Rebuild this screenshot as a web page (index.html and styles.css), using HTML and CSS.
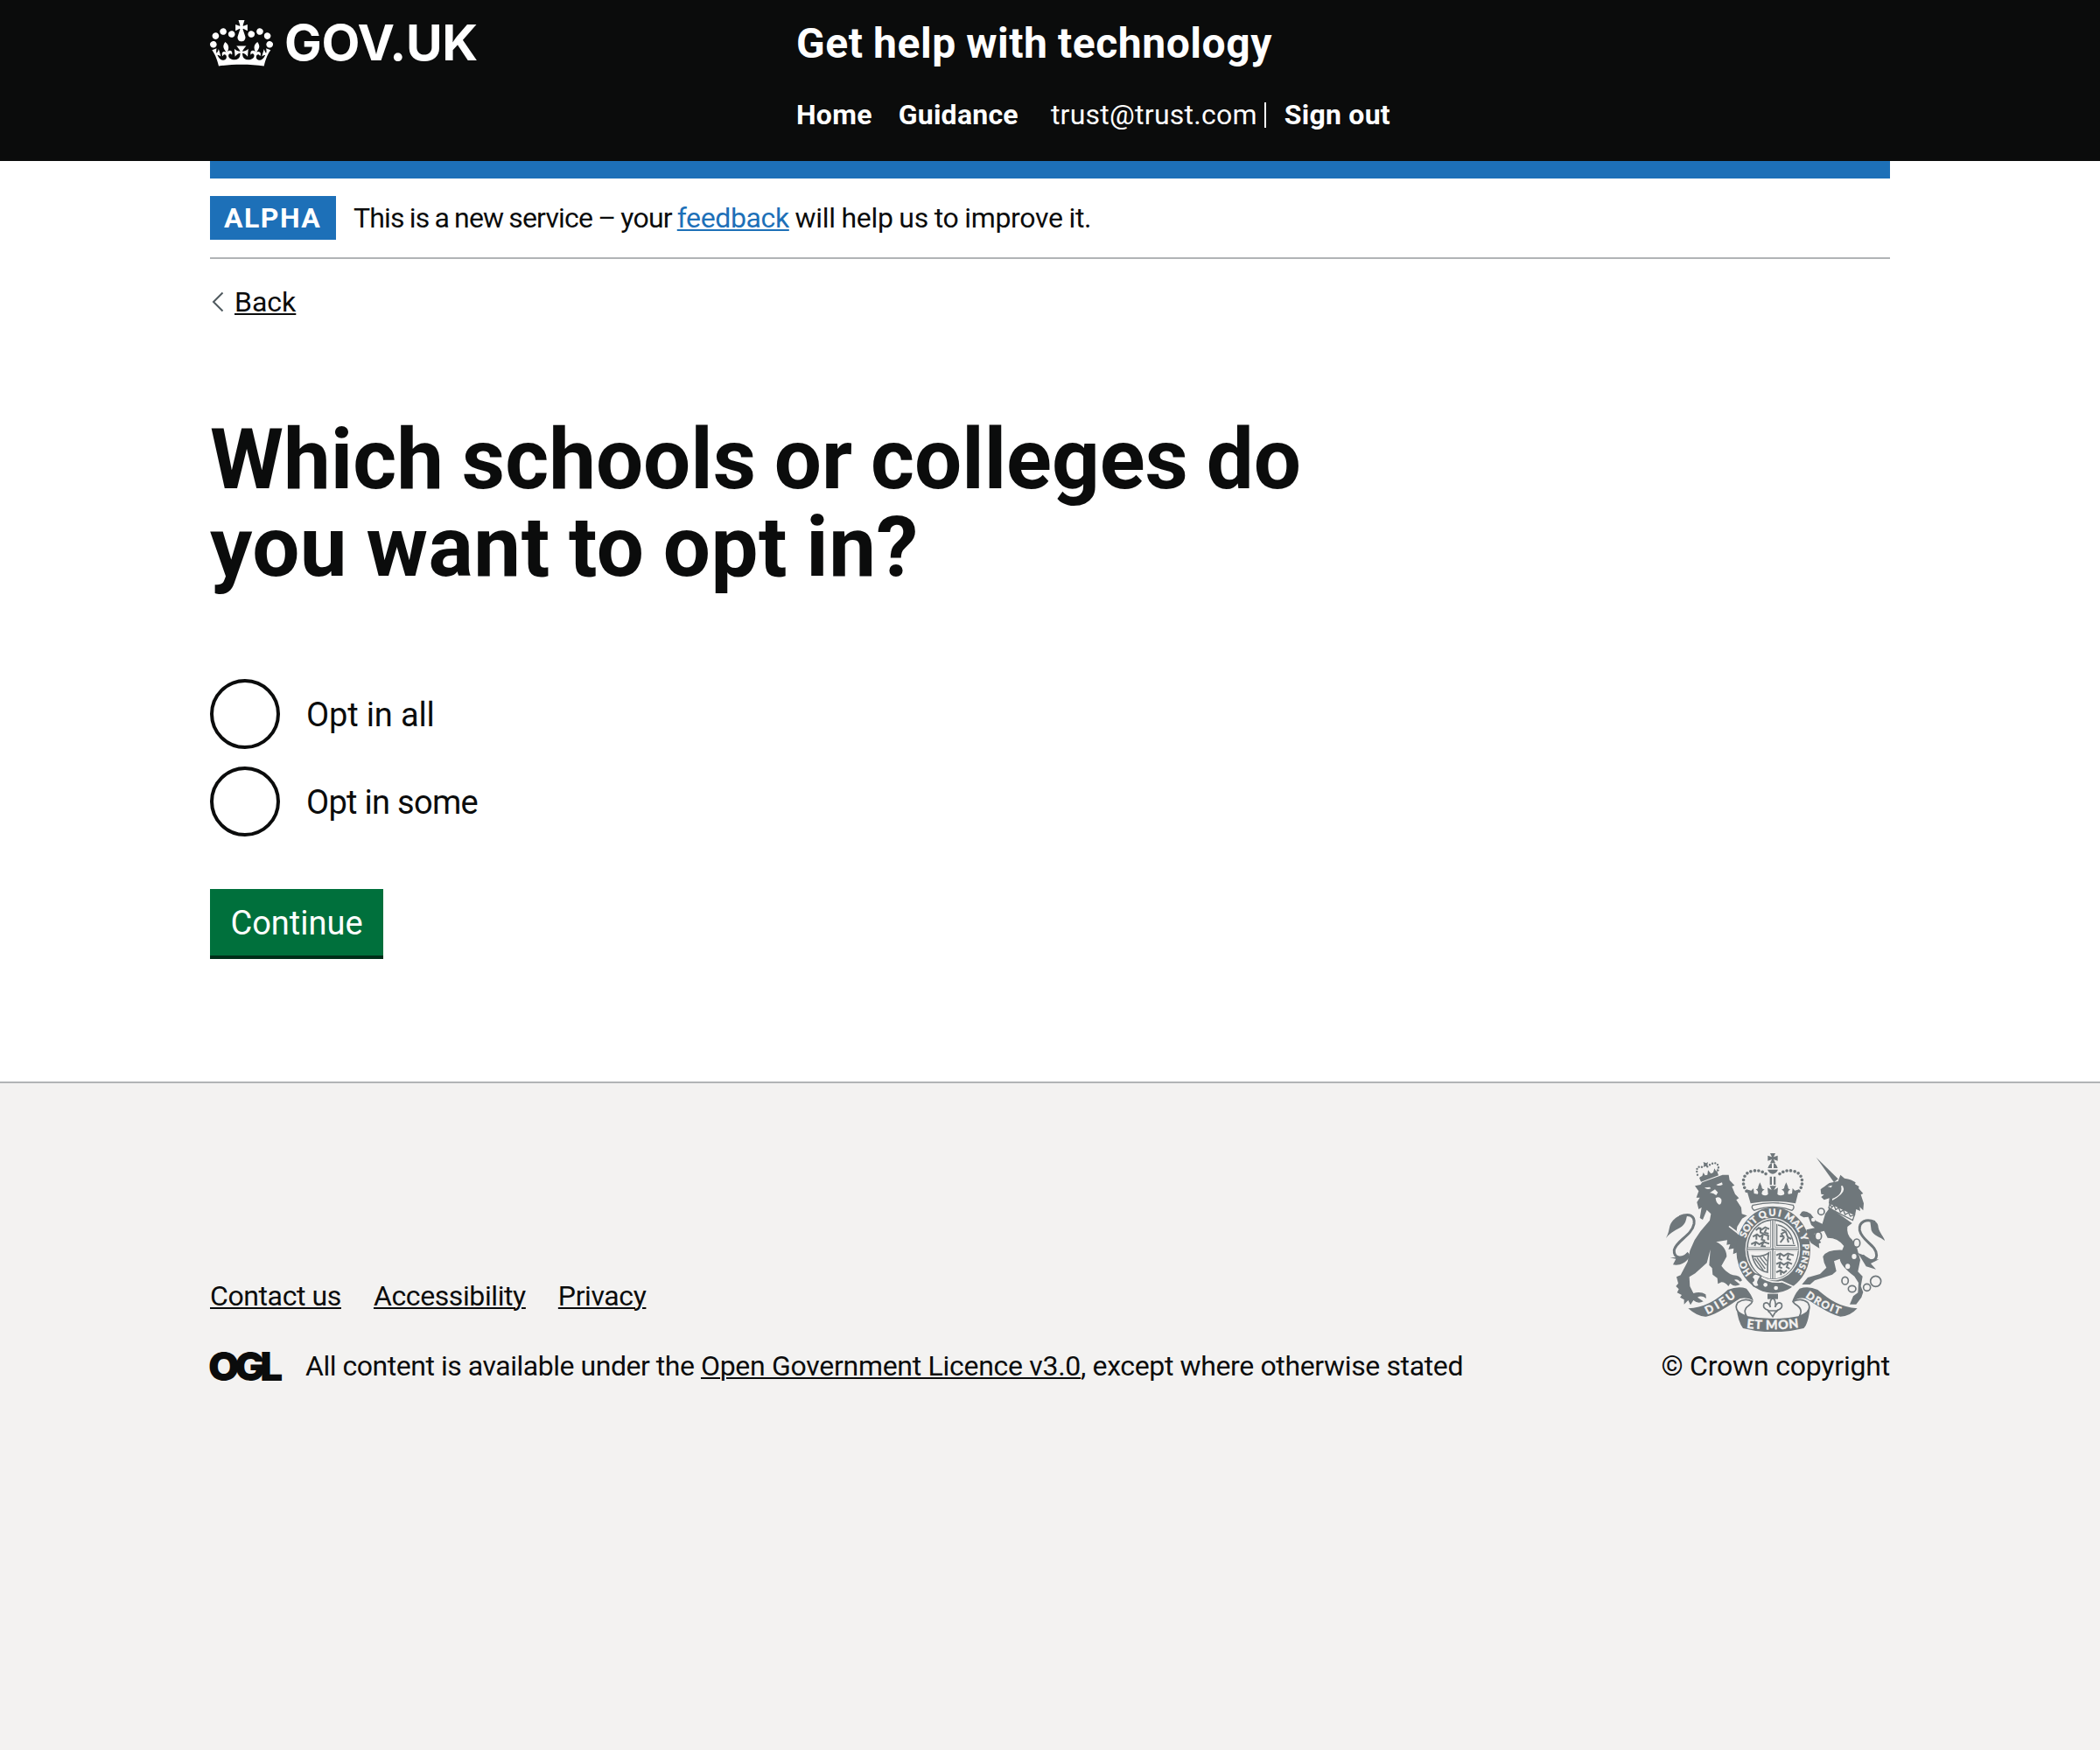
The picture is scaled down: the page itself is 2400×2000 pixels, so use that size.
FILE: index.html
```html
<!DOCTYPE html>
<html lang="en">
<head>
<meta charset="utf-8">
<title>Which schools or colleges do you want to opt in? - Get help with technology</title>
<link rel="stylesheet" href="styles.css">
</head>
<body>
<header class="header">
  <div class="width header-row">
    <a class="logo" href="#" aria-label="GOV.UK">
      <svg class="logo-crown" viewBox="0 0 132 97" width="72" height="53"><path fill="currentColor" fill-rule="evenodd" d="M25 30.2c3.5 1.5 7.7-.2 9.1-3.7 1.5-3.6-.2-7.8-3.9-9.2-3.6-1.4-7.6.3-9.1 3.9-1.4 3.5.3 7.5 3.9 9zM9 39.5c3.6 1.5 7.8-.2 9.2-3.7 1.5-3.6-.2-7.8-3.9-9.1-3.6-1.5-7.6.2-9.1 3.8-1.4 3.5.3 7.5 3.8 9zM4.4 57.2c3.5 1.5 7.7-.2 9.1-3.8 1.5-3.6-.2-7.7-3.9-9.1-3.5-1.5-7.6.3-9.1 3.8-1.4 3.5.3 7.6 3.9 9.1zm38.3-21.4c3.5 1.5 7.7-.2 9.1-3.8 1.5-3.6-.2-7.7-3.9-9.1-3.6-1.5-7.6.3-9.1 3.8-1.3 3.6.4 7.7 3.9 9.1zm64.4-5.6c-3.6 1.5-7.8-.2-9.1-3.7-1.5-3.6.2-7.8 3.8-9.2 3.6-1.4 7.7.3 9.2 3.9 1.3 3.5-.4 7.5-3.9 9zm15.9 9.3c-3.6 1.5-7.7-.2-9.1-3.7-1.5-3.6.2-7.8 3.7-9.1 3.6-1.5 7.7.2 9.2 3.8 1.5 3.5-.3 7.5-3.8 9zm4.7 17.7c-3.6 1.5-7.8-.2-9.2-3.8-1.5-3.6.2-7.7 3.9-9.1 3.6-1.5 7.7.3 9.2 3.8 1.3 3.5-.4 7.6-3.9 9.1zM89.3 35.8c-3.6 1.5-7.8-.2-9.2-3.8-1.4-3.6.2-7.7 3.9-9.1 3.6-1.5 7.7.3 9.2 3.8 1.4 3.6-.3 7.7-3.9 9.1zM69.7 17.7l8.9 4.7V9.3l-8.9 2.8c-.2-.3-.5-.6-.9-.9L72.4 0H59.6l3.5 11.2c-.3.3-.6.5-.9.9l-8.8-2.8v13.1l8.8-4.7c.3.3.6.7.9.9l-5 15.4v.1c-.2.8-.4 1.6-.4 2.4 0 4.1 3.1 7.5 7 8.1h.2c.3 0 .7.1 1 .1.4 0 .7 0 1-.1h.2c4-.6 7.1-4.1 7.1-8.1 0-.8-.1-1.7-.4-2.4V34l-5.1-15.4c.4-.2.7-.6 1-.9zM66 92.8c16.9 0 32.8 1.1 47.1 3.2 4-16.9 8.9-26.7 14-33.5l-9.6-3.4c1 4.9 1.1 7.2 0 10.2-1.5-1.4-3-4.3-4.2-8.7L108.6 76c2.8-2 5-3.2 7.5-3.3-4.4 9.4-10 11.9-13.6 11.2-4.3-.8-6.3-4.6-5.6-7.9 1-4.7 5.7-5.9 8-.5 4.3-8.7-3-11.4-7.6-8.8 7.1-7.2 7.9-13.5 2.1-21.1-8 6.1-8.1 12.3-4.5 20.8-4.7-5.4-12.1-2.5-9.5 6.2 3.4-5.2 7.9-2 7.2 3.1-.6 4.3-6.4 7.8-13.5 7.2-10.3-.9-10.9-8-11.2-13.8 2.5-.5 7.1 1.8 11 7.3L80.2 60c-4.1 4.4-8 5.3-12.3 5.4 1.4-4.4 8-11.6 8-11.6H55.5s6.4 7.2 7.9 11.6c-4.2-.1-8-1-12.3-5.4l1.4 16.4c3.9-5.5 8.5-7.7 10.9-7.3-.3 5.8-.9 12.8-11.1 13.8-7.2.6-12.9-2.9-13.5-7.2-.7-5 3.8-8.3 7.1-3.1 2.7-8.7-4.6-11.6-9.4-6.2 3.7-8.5 3.6-14.7-4.6-20.8-5.8 7.6-5 13.9 2.2 21.1-4.7-2.6-11.9.1-7.7 8.8 2.3-5.5 7.1-4.2 8.1.5.7 3.3-1.3 7.1-5.7 7.9-3.5.7-9-1.8-13.5-11.2 2.5.1 4.7 1.3 7.5 3.3l-4.7-15.4c-1.2 4.4-2.7 7.2-4.3 8.7-1.1-3-.9-5.3 0-10.2l-9.5 3.4c5 6.9 9.9 16.7 14 33.5 14.8-2.1 30.8-3.2 47.7-3.2z"/></svg>
      <span class="logo-text">GOV.UK</span>
    </a>
    <div class="header-content">
      <a class="service-name" href="#">Get help with technology</a>
      <nav class="nav">
        <a class="nav-home" href="#">Home</a>
        <a class="nav-guidance" href="#">Guidance</a>
        <span class="nav-user">trust@trust.com</span>
        <span class="nav-divider"></span>
        <a class="nav-signout" href="#">Sign out</a>
      </nav>
    </div>
  </div>
</header>

<div class="width">
  <div class="blue-bar"></div>
  <div class="phase-banner">
    <strong class="tag">ALPHA</strong>
    <span class="phase-text"><span class="phase-lead">This is a new service – your </span><a href="#">feedback</a><span class="phase-rest"> will help us to improve it.</span></span>
  </div>
  <a class="back" href="#">
    <svg class="back-arrow" viewBox="0 0 14 24" width="14" height="24"><path d="M12.500 1.500 2 12l10.500 10.500" fill="none" stroke="#505a5f" stroke-width="2"/></svg>
    <span class="back-text">Back</span>
  </a>
  <main class="main">
    <h1 class="heading">Which schools or colleges do<br><span class="heading-end">you want to opt in?</span></h1>
    <div class="radios">
      <label class="radio"><span class="radio-circle"></span><span class="radio-label">Opt in all</span></label>
      <label class="radio"><span class="radio-circle"></span><span class="radio-label radio-label-some">Opt in some</span></label>
    </div>
    <button class="button" type="button">Continue</button>
  </main>
</div>

<footer class="footer">
  <div class="width footer-row">
    <div class="footer-meta">
      <div class="footer-links">
        <a href="#">Contact us</a>
        <a href="#">Accessibility</a>
        <a href="#">Privacy</a>
      </div>
      <div class="licence">
        <span class="ogl">OGL</span>
        <span class="licence-text"><span class="licence-lead">All content is available under the </span><a href="#">Open Government Licence v3.0</a><span class="licence-rest">, except where otherwise stated</span></span>
      </div>
    </div>
    <div class="crown-copyright">
      <svg class="arms" viewBox="42 54 750 612" width="250" height="204">
        <defs>
          <path id="garter" d="M410 500A101 117 0 0 1 309 386A101 117 0 0 1 410 269A101 117 0 0 1 511 386A101 117 0 0 1 410 500"/>
          <path id="ribbon-left" d="M184 607Q240 580 288 542"/>
          <path id="ribbon-right" d="M519 547Q572 586 646 610"/>
          <path id="ribbon-mid" d="M318 653Q410 664 506 650"/>
        </defs>
        <!-- lion -->
        <g class="ink">
          <path d="M42 345C60 312 46 300 75 276C88 266 102 262 114 268C110 288 108 296 96 305C78 318 58 322 42 345Z"/>
          <path class="line" stroke-width="9" d="M88 272C122 258 142 268 138 296C130 338 78 352 70 386C68 412 92 420 120 398"/>
          <path d="M56 412L76 416L66 436C84 440 108 434 124 408L116 392L98 410Z"/>
          <path d="M156 138L218 118L222 130L162 152Z"/>
          <path d="M152 118L158 136L166 132L170 120L176 130L184 128L186 112L196 124L204 120L208 106L214 116L222 100L216 122L160 142Z"/>
          <path class="dots" stroke-width="7" stroke-dasharray="0 10" d="M150 128C142 100 156 96 172 104M184 100C200 86 220 80 222 104L220 116"/>
          <path d="M170 84l10 4 6-4-2 10 2 8-8-4-8 4 2-8z"/>
          <path d="M141 166L160 162L166 154L236 128L257 128L260 146L277 164L268 168L279 194L292 208L283 214L300 240L302 262L320 268L303 278L286 306L284 320L300 338L316 368L318 396L308 414L300 400L290 412L286 394L272 400L274 380L256 384L262 366L250 368L252 352L214 358C236 368 250 386 250 408L232 440C246 460 262 468 272 472Q296 472 303 490L296 494Q286 484 276 488L296 504Q276 514 262 500L256 510Q246 496 232 496L220 502L218 482L202 470L200 448L190 438L194 384L182 430L142 466L122 478L124 510L136 534Q160 526 178 538L180 552Q164 540 150 548L170 562Q152 572 136 558L126 574L118 558L104 572L104 556L90 548L96 540L80 532L86 520L76 510L84 500L78 478L92 472L116 426L124 388L140 352L160 322L192 284L196 262L182 248L168 282L158 276L164 240L154 246L148 222L158 206L146 206L154 184Z"/>
        </g>
        <path class="paper" d="M174 172Q182 180 196 175L192 170ZM214 162Q222 168 236 162L234 154ZM192 190L210 178L220 188L214 198Q202 188 192 190ZM212 208Q224 200 232 212Q234 228 224 230Q214 226 212 208Z"/>
        <path class="slit" d="M258 304L284 324L302 342"/>
        <!-- unicorn -->
        <g class="ink">
          <path d="M557 68L632 142L618 154Z"/>
          <path d="M572 178Q582 170 602 156L632 150L640 128L654 140Q680 144 692 154L690 160L704 168L702 174L718 192L710 196L720 226L718 250L706 238L708 252L694 246L690 268L600 226L602 208L584 214L574 204L584 196L574 194Z"/>
          <path d="M604 240L588 262L578 296L556 286L538 262Q520 250 508 254L500 266L514 274L530 272L540 300L552 310L524 316L522 336L540 362L568 380L566 364L574 360L550 330L584 320L596 344Q632 344 652 372L646 386Q594 384 580 408Q582 430 592 446L570 468L528 480L508 504L536 504L552 490L612 470L626 458L618 424L638 416Q640 440 688 476L702 498L700 532L684 544L672 572L694 572L712 548L718 530L710 510L716 476L700 460L708 420L696 376L680 350Q660 334 664 306L680 294Z"/>
          <path d="M742 288C756 280 770 292 770 308C774 328 790 340 792 354C776 340 754 338 746 318Z"/>
          <path class="line" stroke-width="9" d="M758 290C730 276 702 288 706 318C714 356 764 368 764 404C762 426 738 430 716 404"/>
          <path d="M700 396L722 404L744 418L772 418L744 432L762 452L728 442Z"/>
          <path class="line" stroke-width="4" d="M604 226l6 14 8-8 6 16 10-8 6 16 10-8 6 16 12-6 6 12 14-4-6 18-82-42z"/>
          <g class="paper-fill" stroke-width="5"><ellipse cx="574" cy="254" rx="11" ry="11"/><ellipse cx="564" cy="338" rx="11" ry="14"/><ellipse cx="696" cy="362" rx="11" ry="14"/><ellipse cx="656" cy="491" rx="11" ry="13"/><ellipse cx="680" cy="519" rx="13" ry="11"/><ellipse cx="731" cy="514" rx="12" ry="12"/><circle cx="761" cy="493" r="18"/></g>
        </g>
        <path class="paper" d="M596 168l16-4-4 8zM648 166Q660 186 628 206L612 216L612 210Q650 196 642 166ZM657 442a8 9 0 1 0 16 0a8 9 0 1 0-16 0M679 408a8 9 0 1 0 16 0a8 9 0 1 0-16 0M540 282a7 7 0 1 0 14 0a7 7 0 1 0-14 0"/>
        <!-- garter and shield -->
        <ellipse class="ink" cx="410" cy="386" rx="127" ry="147"/>
        <ellipse class="paper" cx="408" cy="383" rx="94" ry="107"/>
        <ellipse class="ink" cx="408" cy="383" rx="90" ry="103"/>
        <path class="paper" d="M400 286V376H324C326 330 358 290 400 286ZM416 286V376H494C490 330 458 290 416 286ZM400 390V484C358 478 328 440 324 390ZM416 390V484C460 478 490 440 494 390Z"/>
        <g class="line" stroke-width="6">
          <path d="M350 318l10-8 10 6 12-8 14 6M366 308v18l10 4M386 314l-6 12 14 4M340 340l14-8 10 8 12-8 20 6M352 334v16M374 336l-4 14 12 4M334 366l16-8 12 8 14-8 20 6M350 360l-4 12M376 360l-6 12 14 2M392 340v12"/>
          <path d="M420 404l14-6 12 8 14-8 20 6M434 400l-4 14 10 6M462 402l-4 14 12 4M420 434l14-6 12 8 14-8 14 6M434 430l-4 14 10 4M460 432l-4 12 10 6M420 462l14-6 12 8 10-8M436 460v12"/>
          <path stroke-width="4" d="M422 296V370H486M426 300Q470 310 480 366"/>
          <path d="M434 360l12-16-8-14 14-8 8 20 12 6M448 340l-16-2M438 316l12 4M458 346l4 14"/>
          <path stroke-width="5" d="M338 406Q370 412 394 396Q390 420 390 462Q350 456 338 406Z"/>
          <path stroke-width="4" d="M354 412L382 450M364 410L386 438M376 408L388 424M346 414L376 456"/>
        </g>
        <path class="paper" d="M402 284h12v200h-12zM322 377h174v12H322z"/>
        <path class="ink" d="M406 284h4v200h-4zM322 381h174v4H322z"/>
        <g class="arms-text" font-size="33" text-anchor="middle">
          <text><textPath href="#garter" startOffset="108">HO</textPath></text>
          <text><textPath href="#garter" startOffset="247" textLength="74">SOIT</textPath></text>
          <text><textPath href="#garter" startOffset="328" textLength="72">QUI</textPath></text>
          <text><textPath href="#garter" startOffset="412" textLength="72">MAL</textPath></text>
          <text><textPath href="#garter" startOffset="469">Y</textPath></text>
          <text font-size="30"><textPath href="#garter" startOffset="541" textLength="100">PENSE</textPath></text>
        </g>
        <path class="slit" d="M362 474Q398 502 440 494L480 512"/>
        <circle class="paper" cx="383" cy="505" r="7"/><circle class="paper" cx="419" cy="516" r="7"/>
        <path class="paper-fill" stroke-width="5" d="M368 476Q344 458 336 480Q350 488 336 496Q342 520 362 508Q350 496 368 476Z"/>
        <!-- crown -->
        <g class="ink">
          <path d="M399 54h18l-6 13 14-5v18l-14-5 6 13h-18l6-13-14 5V62l14 5z"/>
          <path d="M391 105Q396 90 405 88V105ZM425 105Q420 90 411 88V105ZM390 110h36q-6 14-18 15q-12-1-18-15zM398 134h7v28h-7zM411 134h7v28h-7z"/>
          <path class="dots" stroke-width="11" stroke-dasharray="0 13.500" d="M318 184C300 160 304 124 334 116C362 108 380 120 390 130M498 184C516 160 512 124 482 116C454 108 436 120 426 130"/>
          <path d="M318 178L334 182L342 174L344 192L356 194Q362 186 350 178Q358 178 358 168L364 154L370 168Q370 178 380 178Q366 186 372 196Q384 202 392 194L390 172L404 180L398 166H420L412 180L426 172L424 194Q432 202 446 196Q452 186 438 178Q448 178 448 168L454 154L460 168Q460 178 468 178Q456 186 462 194L474 192L476 174L484 182L498 178L486 226Q408 212 332 226Z"/>
        </g>
        <path class="paper-fill" stroke-width="4" d="M340 232Q408 216 478 232Q484 242 474 250Q408 226 344 250Q332 240 340 232Z"/>
        <!-- motto ribbon -->
        <g class="ink">
          <path d="M118 586C168 584 214 560 254 522Q290 508 318 518Q336 540 342 560Q322 546 296 552C256 576 222 604 180 614Q152 616 118 586Z"/>
          <path d="M698 586C642 582 604 558 562 522Q530 508 500 518Q480 540 474 566Q494 546 520 552C560 574 594 602 640 614Q672 614 698 586Z"/>
          <path d="M284 582Q294 604 318 612Q408 630 500 612Q530 604 536 580Q530 640 514 654Q408 680 306 654Q288 630 284 582Z"/>
          <path d="M390 536h36v18h-36z"/>
        </g>
        <path class="paper-fill" stroke-width="5" d="M338 562Q312 548 288 566Q276 582 290 598Q306 610 318 612Q304 590 326 576Q336 570 338 562ZM478 562Q506 548 528 566Q540 582 526 598Q510 610 500 612Q512 590 492 576Q480 570 478 562Z"/>
        <path class="paper-fill" stroke-width="5" d="M408 548Q422 564 416 582Q424 560 438 570Q444 586 424 592Q420 600 416 600L408 614L398 600Q394 600 392 592Q372 586 378 570Q392 560 400 582Q394 564 408 548ZM390 594H426"/>
        <g class="arms-text" font-size="38">
          <text><textPath href="#ribbon-left" textLength="116">DIEU</textPath></text>
          <text font-size="36"><textPath href="#ribbon-right" textLength="132">DROIT</textPath></text>
          <text font-size="43"><textPath href="#ribbon-mid" textLength="180">ET MON</textPath></text>
        </g>
      </svg>
      <span class="copyright">© Crown copyright</span>
    </div>
  </div>
</footer>
</body>
</html>
```
FILE: styles.css
```css
* {
  box-sizing: border-box;
}

body {
  margin: 0;
  min-height: 2000px;
  display: flex;
  flex-direction: column;
  background: #fff;
  color: #0b0c0c;
  font-family: Roboto, "Liberation Sans", sans-serif;
  font-size: 32px;
  line-height: 50px;
}

a {
  color: inherit;
  text-decoration-thickness: 2px;
  text-underline-offset: 2px;
}

.width {
  width: 1920px;
  margin: 0 auto;
}

/* Header */
.header {
  height: 184px;
  background: #0b0c0c;
  color: #fff;
}

.header a {
  text-decoration: none;
}

.header-row {
  display: flex;
}

.logo {
  display: flex;
  width: 670px;
  padding-top: 23px;
}

.logo-text {
  margin-left: 13px;
  font-family: Inter, sans-serif;
  font-size: 57px;
  font-weight: 700;
  letter-spacing: -0.4px;
  line-height: 52px;
}

.header-content {
  padding-top: 20px;
}

.service-name {
  display: block;
  font-size: 48px;
  font-weight: 700;
  letter-spacing: 0.55px;
  word-spacing: -1px;
  line-height: 60px;
}

.nav {
  display: flex;
  align-items: center;
  padding-top: 26px;
  font-weight: 700;
  letter-spacing: 0.25px;
}

.nav-guidance {
  margin-left: 30px;
}

.nav-user {
  margin-left: 37px;
  font-weight: 400;
}

.nav-divider {
  width: 2px;
  height: 29px;
  margin-left: 8px;
  background: #fff;
}

.nav-signout {
  margin-left: 21px;
}

/* Phase banner */
.blue-bar {
  height: 20px;
  background: #1d70b8;
}

.phase-banner {
  display: flex;
  padding: 20px 0;
  border-bottom: 2px solid #b1b4b6;
}

.tag {
  width: 144px;
  padding-left: 16px;
  background: #1d70b8;
  color: #fff;
  letter-spacing: 1.5px;
}

.phase-text {
  margin-left: 20px;
  white-space: pre;
}

.phase-text a {
  color: #1d70b8;
  letter-spacing: -0.38px;
}

.phase-lead {
  letter-spacing: -0.82px;
  word-spacing: -1.1px;
}

.phase-rest {
  letter-spacing: -0.3px;
  word-spacing: -0.9px;
}

.back {
  display: flex;
  align-items: center;
  height: 50px;
  margin-top: 24px;
  text-decoration: none;
}

.back-arrow {
  margin-left: 2px;
}

.back-text {
  margin-left: 12px;
  text-decoration: underline;
  text-decoration-thickness: 2px;
  text-underline-offset: 2px;
}

/* Question */
.main {
  padding: 105px 0 144px;
}

.heading {
  margin: 0 0 101px;
  font-size: 96px;
  font-weight: 700;
  line-height: 100px;
  word-spacing: -3px;
}

.heading-end {
  letter-spacing: 0.5px;
}

.radios {
  display: grid;
  gap: 20px;
}

.radio {
  display: flex;
  align-items: center;
  font-size: 38px;
}

.radio-circle {
  width: 80px;
  height: 80px;
  border: 4px solid #0b0c0c;
  border-radius: 50%;
}

.radio-label {
  margin-left: 30px;
  padding-top: 2px;
  letter-spacing: -0.15px;
}

.radio-label-some {
  letter-spacing: -0.7px;
}

.button {
  display: block;
  width: 198px;
  height: 76px;
  margin-top: 60px;
  padding: 2px 0 0;
  border: 0;
  background: #00703c;
  box-shadow: 0 4px 0 #002d18;
  color: #fff;
  font-family: inherit;
  font-size: 38px;
}

/* Footer */
.footer {
  flex: 1;
  border-top: 2px solid #b1b4b6;
  background: #f3f2f1;
}

.footer-row {
  display: flex;
  justify-content: space-between;
  align-items: flex-end;
  padding-top: 80px;
}

.footer-links {
  display: flex;
  gap: 37px;
  margin-bottom: 30px;
  letter-spacing: -0.4px;
}

.licence {
  display: flex;
}

.ogl {
  width: 84px;
  margin-left: -2px;
  font-family: Inter, sans-serif;
  font-size: 46px;
  font-weight: 900;
  letter-spacing: -5.5px;
}

.licence-text {
  margin-left: 27px;
  white-space: pre;
}

.licence-lead {
  letter-spacing: -0.47px;
}

.licence-text a {
  letter-spacing: -0.29px;
}

.licence-rest {
  letter-spacing: -0.37px;
}

.crown-copyright {
  display: flex;
  flex-direction: column;
  align-items: flex-end;
}

.copyright {
  letter-spacing: -0.2px;
}

.arms {
  margin: 0 6px 14px 0;
}

.ink {
  fill: #6f777b;
}

.paper {
  fill: #f3f2f1;
}

.paper-fill {
  fill: #f3f2f1;
  stroke: #6f777b;
}

.slit {
  fill: none;
  stroke: #f3f2f1;
  stroke-width: 5;
}

.line {
  fill: none;
  stroke: #6f777b;
}

.dots {
  fill: none;
  stroke: #6f777b;
  stroke-linecap: round;
}

.arms-text {
  fill: #f3f2f1;
  stroke: #f3f2f1;
  stroke-width: 1;
  font-family: Lato, sans-serif;
  font-weight: 900;
}
```
